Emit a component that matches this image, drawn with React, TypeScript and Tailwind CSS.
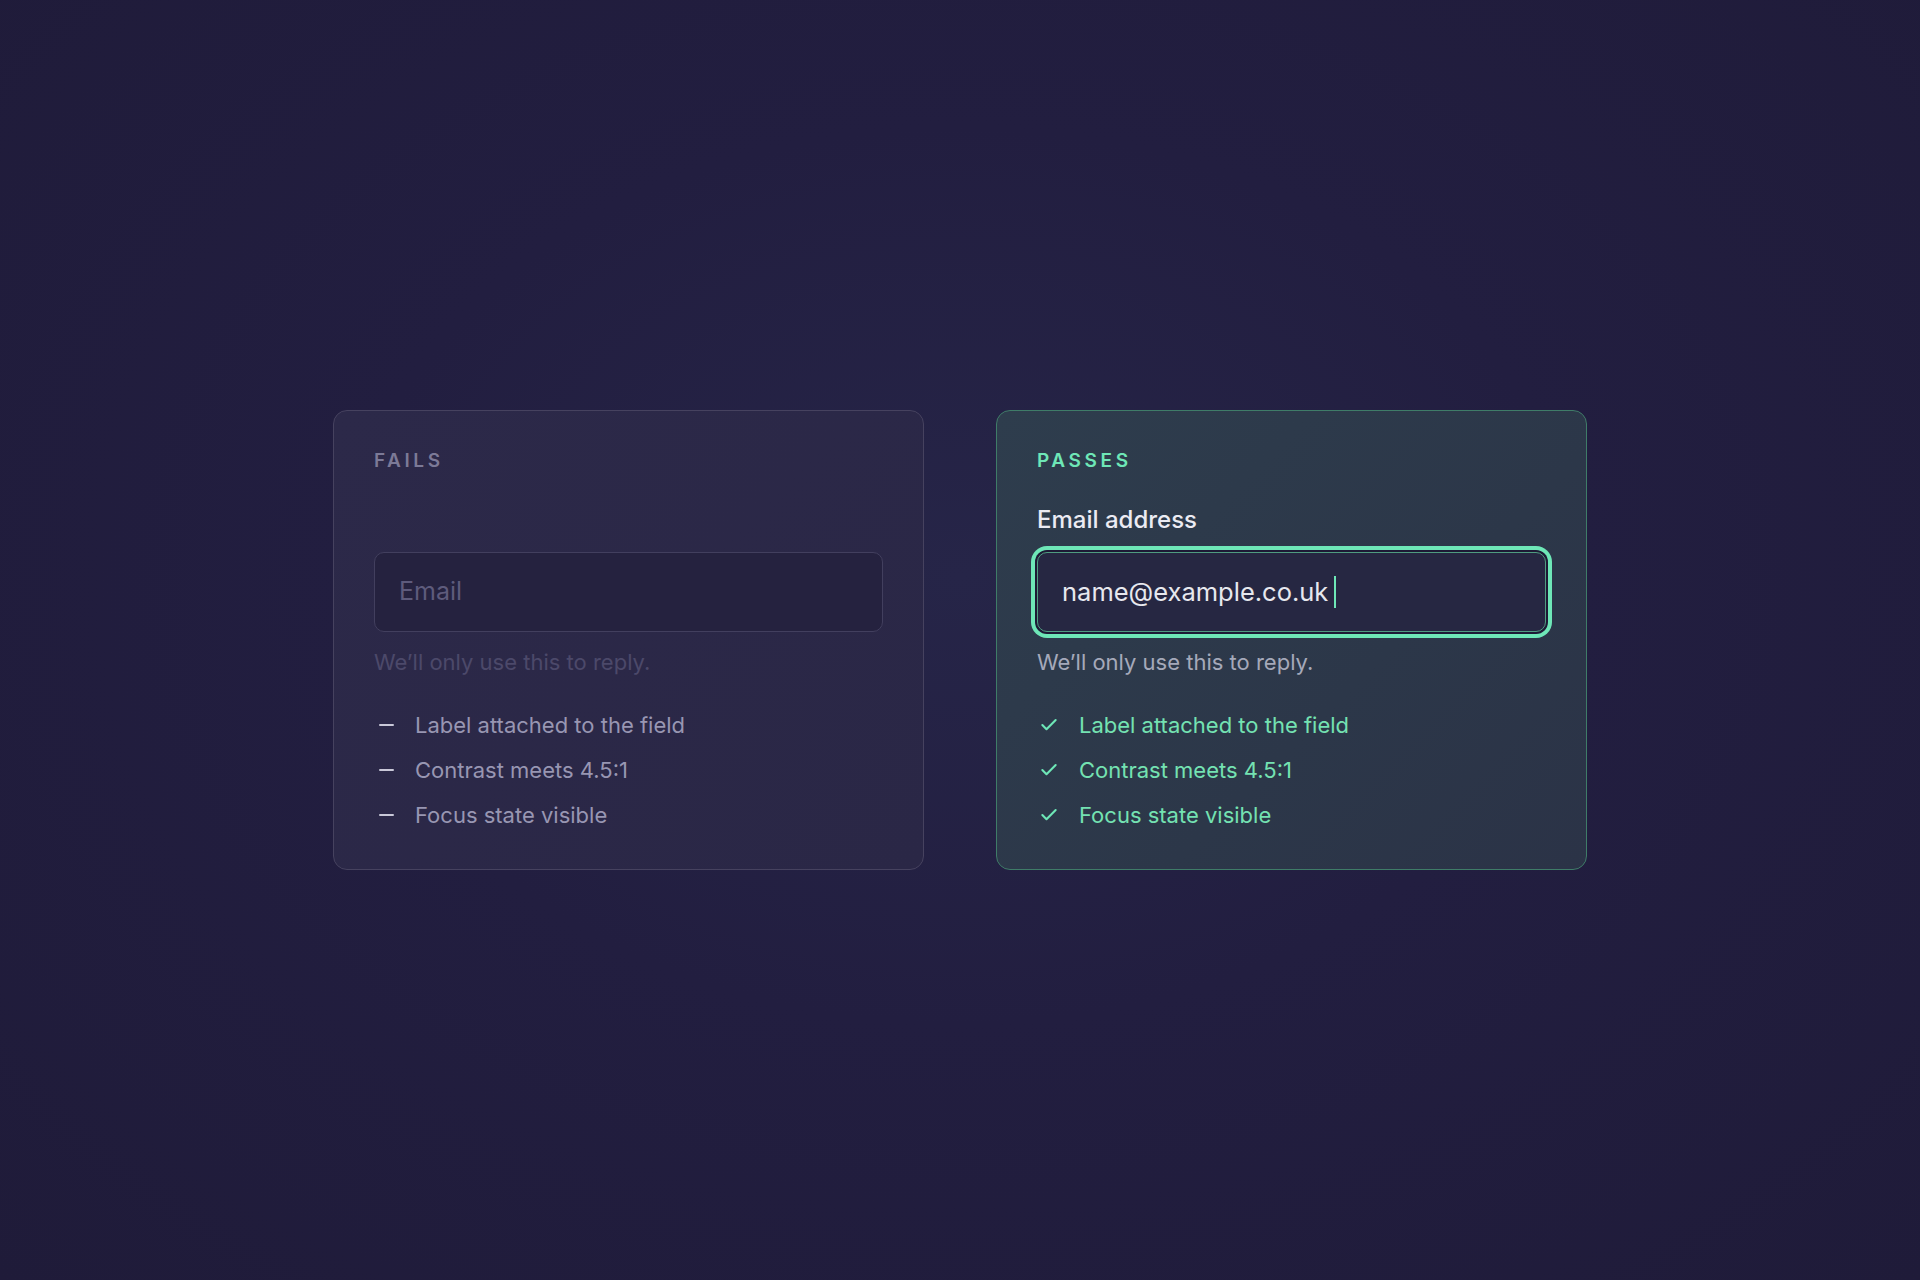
import { Check } from "lucide-react";

const font = { fontFamily: "Inter, 'Noto Sans', sans-serif" };

const items = ["Label attached to the field", "Contrast meets 4.5:1", "Focus state visible"];

function FailsCard() {
  return (
    <div className="w-[591px] rounded-[14px] border border-[#46425f] bg-[linear-gradient(135deg,#2c2949_0%,#2a2746_100%)] px-10 pt-10 pb-10">
      <div className="text-[19px] leading-[20px] font-semibold tracking-[0.19em] text-[#7c7a97]">FAILS</div>
      {/* no label here, keep the spacing */}
      <div className="mt-[35px] h-[28px]" />
      <div className="mt-[18px] flex h-[80px] items-center rounded-[10px] border border-[#423f5e] bg-[#25223f] px-6 text-[25px] text-[#5e5b7c]">
        Email
      </div>
      <p className="mt-[16px] text-[22px] leading-[28px] text-[#4c496a]">We’ll only use this to reply.</p>
      <ul className="mt-[35px] flex flex-col gap-[17px]">
        {items.map((t) => (
          <li key={t} className="flex items-center text-[22px] leading-[28px] text-[#9896b2]">
            <span className="mr-[21px] ml-[5px] h-[2px] w-[15px] rounded bg-[#c9c8d8]" />
            {t}
          </li>
        ))}
      </ul>
    </div>
  );
}

function PassesCard() {
  return (
    <div className="w-[591px] rounded-[14px] border border-[#3f7c68] bg-[linear-gradient(135deg,#2e3d4d_0%,#2c3749_60%,#2b3347_100%)] px-10 pt-10 pb-10">
      <div className="text-[19px] leading-[20px] font-semibold tracking-[0.19em] text-[#6ee7b7]">PASSES</div>
      <label htmlFor="email" className="mt-[35px] block text-[24px] leading-[28px] font-medium text-[#ebebf3]">
        Email address
      </label>
      <div className="mt-[18px] flex h-[80px] items-center rounded-[10px] border border-[#4f9c80] bg-[#262742] px-6 text-[25.5px] text-[#e7e8ee] shadow-[0_0_0_2px_#1d1a35,0_0_0_6px_#6ee7b7]">
        <span id="email">name@example.co.uk</span>
        <span className="ml-[6px] h-[32px] w-[2px] bg-[#6ee7b7]" />
      </div>
      <p className="mt-[16px] text-[22px] leading-[28px] text-[#a5a9ba]">We’ll only use this to reply.</p>
      <ul className="mt-[35px] flex flex-col gap-[17px]">
        {items.map((t) => (
          <li key={t} className="flex items-center text-[22px] leading-[28px] text-[#74e2b2]">
            <Check className="mr-[20px] ml-[2px] h-[20px] w-[20px] text-[#6ee7b7]" strokeWidth={2.5} />
            {t}
          </li>
        ))}
      </ul>
    </div>
  );
}

export default function App() {
  return (
    <div
      style={font}
      className="flex h-[1280px] w-full items-center justify-center gap-[72px] bg-[#201c3b] bg-[radial-gradient(ellipse_at_50%_45%,#262548_0%,#221e40_45%,#1f1b39_100%)]"
    >
      <FailsCard />
      <PassesCard />
    </div>
  );
}
